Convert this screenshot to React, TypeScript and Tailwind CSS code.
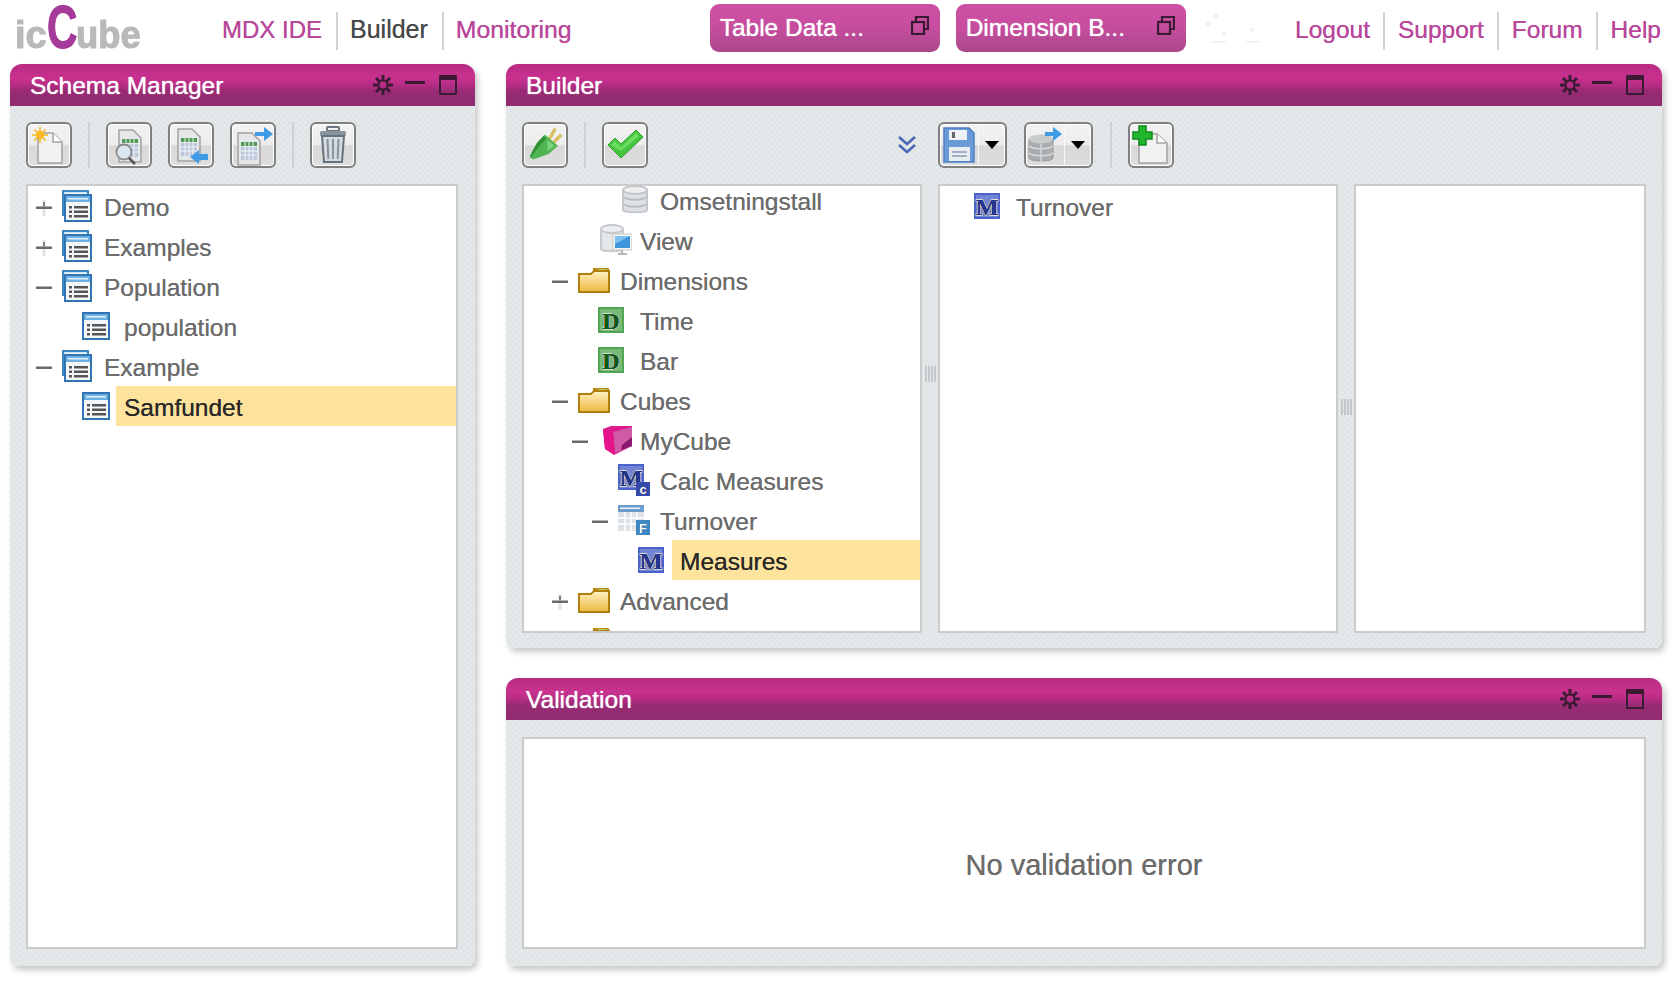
import React from 'react';

const font = 'font-["Liberation_Sans",Arial,sans-serif]';

// ---- tree icons ----
const ListBody = () => (
  <>
    <rect x="1" y="1" width="26" height="26" fill="#f4f8fb" stroke="#2f75b2" strokeWidth="2" />
    <rect x="2" y="2" width="24" height="6" fill="#6fb0e4" />
    <rect x="4" y="4" width="20" height="1.5" fill="#e4f2fc" />
    <rect x="5" y="12" width="3" height="2.5" fill="#555" />
    <rect x="10" y="12" width="14" height="2.5" fill="#555" />
    <rect x="5" y="16.5" width="3" height="2.5" fill="#555" />
    <rect x="10" y="16.5" width="14" height="2.5" fill="#555" />
    <rect x="5" y="21" width="3" height="2.5" fill="#555" />
    <rect x="10" y="21" width="14" height="2.5" fill="#555" />
  </>
);

const ListIcon = () => (
  <svg width="28" height="28" viewBox="0 0 28 28">
    <ListBody />
  </svg>
);

const StackIcon = () => (
  <svg width="30" height="32" viewBox="0 0 30 32">
    <rect x="1" y="1" width="25" height="24" fill="#cfe4f5" stroke="#3f88c6" strokeWidth="2" />
    <rect x="3" y="3" width="21" height="2" fill="#eef7fd" />
    <g transform="translate(2 4)">
      <ListBody />
    </g>
  </svg>
);

const FolderIcon = () => (
  <svg width="32" height="26" viewBox="0 0 32 26">
    <defs>
      <linearGradient id="folderFill" x1="0" y1="0" x2="0" y2="1">
        <stop offset="0" stopColor="#fdf1c4" />
        <stop offset="1" stopColor="#eeb93e" />
      </linearGradient>
    </defs>
    <path d="M15 1h15a1 1 0 0 1 1 1v4H15z" fill="#b98a12" />
    <path d="M20 2h9v2h-9z" fill="#bcd06a" />
    <path d="M1 7h12l3-3h15v21H1z" fill="url(#folderFill)" stroke="#b07f0c" strokeWidth="2" />
  </svg>
);

const LetterBox = ({ letter, bg, fg }: { letter: string; bg: string; fg: string }) => (
  <svg width="26" height="26" viewBox="0 0 26 26">
    <rect width="26" height="26" fill={bg} />
    <rect x="2" y="2" width="22" height="22" fill="#fff" opacity="0.22" />
    <text x="13" y="21.500" textAnchor="middle" fontFamily="Liberation Serif, serif" fontWeight="700" fontSize="24" fill={fg} stroke="#fff" strokeWidth="1.500" paintOrder="stroke">
      {letter}
    </text>
  </svg>
);

const DimIcon = () => <LetterBox letter="D" bg="#52a852" fg="#0d5a12" />;
const MeasureIcon = () => <LetterBox letter="M" bg="#4a62c9" fg="#24368f" />;

const CalcIcon = () => (
  <svg width="32" height="32" viewBox="0 0 32 32">
    <rect width="26" height="26" fill="#4a62c9" />
    <rect x="2" y="2" width="22" height="22" fill="#fff" opacity="0.22" />
    <text x="13" y="21.500" textAnchor="middle" fontFamily="Liberation Serif, serif" fontWeight="700" fontSize="24" fill="#24368f" stroke="#fff" strokeWidth="1.500" paintOrder="stroke">M</text>
    <rect x="18" y="18" width="14" height="14" fill="#3549a8" />
    <text x="25" y="30" textAnchor="middle" fontFamily="Liberation Sans, sans-serif" fontWeight="700" fontSize="13" fill="#fff">c</text>
  </svg>
);

const FactIcon = () => (
  <svg width="32" height="30" viewBox="0 0 32 30">
    <rect x="0" y="0" width="26" height="26" fill="#dfe3e8" />
    <rect x="0" y="0" width="26" height="7" fill="#6d9ccc" />
    <rect x="2" y="2.5" width="20" height="1.5" fill="#eef5fb" />
    <path d="M7 7v19M13 7v19M19 7v19M0 13h26M0 19h26" stroke="#fff" strokeWidth="1.5" />
    <rect x="18" y="15" width="14" height="15" fill="#3f86c4" />
    <text x="25" y="28" textAnchor="middle" fontFamily="Liberation Sans, sans-serif" fontWeight="700" fontSize="13" fill="#fff">F</text>
  </svg>
);

const CubeIcon = () => (
  <svg width="30" height="30" viewBox="0 0 30 30">
    <path d="M1 4 L9 1 L30 1 L30 21 L12 30 L3 24z" fill="#dd1b8d" />
    <path d="M11 7 L30 2 L30 21 L13 28z" fill="#cf5aa6" />
    <path d="M20 20 L30 12 L30 21 L19 25z" fill="#8a1770" />
    <path d="M1 4 L11 7 L13 29 L3 24z" fill="#e5148c" />
  </svg>
);

const DbIcon = () => (
  <svg width="26" height="30" viewBox="0 0 26 30">
    <path d="M1 5v20c0 3 24 3 24 0V5z" fill="#dfe2e5" stroke="#c3c7cb" strokeWidth="2" />
    <ellipse cx="13" cy="5" rx="12" ry="4" fill="#eceef0" stroke="#c3c7cb" strokeWidth="2" />
    <path d="M2 12c2 3.500 20 3.500 22 0M2 19c2 3.500 20 3.500 22 0" fill="none" stroke="#b9bdc2" strokeWidth="2" />
  </svg>
);

const ViewIcon = () => (
  <svg width="32" height="32" viewBox="0 0 32 32">
    <path d="M1 5v20c0 3 22 3 22 0V5z" fill="#e4e6e8" stroke="#c7cacd" strokeWidth="2" />
    <ellipse cx="12" cy="5" rx="11" ry="4" fill="#eceef0" stroke="#c7cacd" strokeWidth="2" />
    <rect x="13" y="10" width="19" height="16" fill="#f6f6f6" stroke="#c4c7ca" />
    <rect x="15" y="12" width="15" height="12" fill="#3f95dc" />
    <path d="M15 12h15l-15 8z" fill="#7fc0ee" />
    <path d="M18 30h9M22 26v4" stroke="#b4b7ba" strokeWidth="2" />
  </svg>
);

// ---- expanders ----
const Expander = ({ kind }: { kind?: 'plus' | 'minus' }) => {
  if (!kind) return <span className="w-[16px]" />;
  return (
    <svg width="16" height="18" viewBox="0 0 16 18" className="mt-[3px] blur-[0.3px]">
      {kind === 'plus' && <rect x="6.500" y="1" width="3" height="16" fill="#dfe1e3" />}
      {kind === 'plus' && <rect x="7" y="3" width="2" height="4" fill="#808080" />}
      <rect x="0" y="7.500" width="16" height="2.500" fill="#6a6a6a" />
    </svg>
  );
};

type Row = {
  level: number;
  label?: string;
  icon: React.ReactNode;
  exp?: 'plus' | 'minus';
  selected?: boolean;
};

const TreeRow = ({ row }: { row: Row }) => (
  <div className="flex h-[40px] items-center" style={{ paddingLeft: row.level * 20 }}>
    <span className="flex w-[34px] shrink-0 justify-start pl-[8px]">
      <Expander kind={row.exp} />
    </span>
    <span className="flex w-[34px] shrink-0 justify-start">{row.icon}</span>
    <span className={`h-[40px] flex-1 pl-[8px] text-[24.5px] leading-[43px] ${row.selected ? 'bg-[#fde39c] text-[#2a2a2a]' : 'text-[#6c6c6c]'}`}>
      {row.label}
    </span>
  </div>
);

const schemaRows: Row[] = [
  { level: 0, label: 'Demo', icon: <StackIcon />, exp: 'plus' },
  { level: 0, label: 'Examples', icon: <StackIcon />, exp: 'plus' },
  { level: 0, label: 'Population', icon: <StackIcon />, exp: 'minus' },
  { level: 1, label: 'population', icon: <ListIcon /> },
  { level: 0, label: 'Example', icon: <StackIcon />, exp: 'minus' },
  { level: 1, label: 'Samfundet', icon: <ListIcon />, selected: true },
];

const builderRows: Row[] = [
  { level: 2, label: 'Omsetningstall', icon: <span className="ml-[4px]"><DbIcon /></span> },
  { level: 1, label: 'View', icon: <span className="ml-[2px]"><ViewIcon /></span> },
  { level: 0, label: 'Dimensions', icon: <FolderIcon />, exp: 'minus' },
  { level: 1, label: 'Time', icon: <DimIcon /> },
  { level: 1, label: 'Bar', icon: <DimIcon /> },
  { level: 0, label: 'Cubes', icon: <FolderIcon />, exp: 'minus' },
  { level: 1, label: 'MyCube', icon: <span className="ml-[4px]"><CubeIcon /></span>, exp: 'minus' },
  { level: 2, label: 'Calc Measures', icon: <CalcIcon /> },
  { level: 2, label: 'Turnover', icon: <FactIcon />, exp: 'minus' },
  { level: 3, label: 'Measures', icon: <MeasureIcon />, selected: true },
  { level: 0, label: 'Advanced', icon: <FolderIcon />, exp: 'plus' },
  { level: 0, icon: <FolderIcon /> },
];

// ---- toolbar icons ----
const SheetGrid = () => (
  <g>
    <path d="M11 6h14l8 8v24H11z" fill="#e6e7e8" stroke="#a3a3a3" strokeWidth="1.500" />
    <rect x="14" y="15" width="16" height="4" fill="#4f9a55" />
    <rect x="14" y="20" width="16" height="13" fill="#bcc6db" />
    <path d="M18 15v18M22 15v18M26 15v18M14 24h16M14 28h16" stroke="#f2f4f8" strokeWidth="1" />
  </g>
);

const NewIcon = () => (
  <svg width="42" height="42" viewBox="0 0 42 42">
    <path d="M10 9h15l9 9v21H10z" fill="#f1f1f1" stroke="#a3a3a3" strokeWidth="1.500" />
    <path d="M25 9v9h9" fill="#fff" stroke="#a3a3a3" strokeWidth="1.500" />
    <circle cx="12" cy="11" r="4" fill="#ffb81f" />
    <path d="M12 3v16M4 11h16M6.500 5.500l11 11M17.500 5.500l-11 11" stroke="#ffb81f" strokeWidth="1.600" />
  </svg>
);

const SearchIcon = () => (
  <svg width="42" height="42" viewBox="0 0 42 42">
    <SheetGrid />
    <circle cx="16" cy="28" r="7.500" fill="#d9e8f3" stroke="#8b8b8b" strokeWidth="1.800" />
    <path d="M21 34l6 6" stroke="#555" strokeWidth="2.500" />
  </svg>
);

const ImportIcon = () => (
  <svg width="42" height="42" viewBox="0 0 42 42">
    <g transform="translate(-3 -1)"><SheetGrid /></g>
    <path d="M38 30h-9v-4l-9 7 9 7v-4h9z" fill="#3f9be6" />
  </svg>
);

const ExportIcon = () => (
  <svg width="42" height="42" viewBox="0 0 42 42">
    <g transform="translate(-5 3)"><SheetGrid /></g>
    <path d="M23 8h9V3l9 7-9 7v-5h-9z" fill="#3f9be6" />
  </svg>
);

const TrashIcon = () => (
  <svg width="42" height="42" viewBox="0 0 42 42">
    <rect x="15" y="3" width="12" height="4" rx="1" fill="none" stroke="#6c7680" strokeWidth="2" />
    <rect x="8" y="7" width="26" height="5" rx="1.500" fill="#8a949e" />
    <path d="M10 12h22l-2 26H12z" fill="#d5dadf" stroke="#68727c" strokeWidth="2" />
    <path d="M15.500 15l.8 20M21 15v20M26.500 15l-.8 20" stroke="#87919b" strokeWidth="2" />
  </svg>
);

const PlugIcon = () => (
  <svg width="36" height="36" viewBox="0 0 42 42">
    <path d="M26 14L33 2M31 18L40 9" stroke="#d8bf63" strokeWidth="4" />
    <path d="M21 9L36 22L26 31L18 34L7 38L3 34L8 25L12 18z" fill="#4fb552" />
    <path d="M3 38L12 25L22 14L20 10L12 18L7 27z" fill="#2f9135" />
    <path d="M24 15L32 22L24 28z" fill="#7fd27e" />
  </svg>
);

const CheckIcon = () => (
  <svg width="42" height="42" viewBox="0 0 42 42">
    <path d="M4 21L11 14L17 20L32 6L39 13L17 34z" fill="#46c53f" stroke="#2fa02c" strokeWidth="1" />
    <path d="M7 21L11 17L17 23L32 9L35 12L17 27z" fill="#6ddc62" />
  </svg>
);

const SaveIcon = () => (
  <svg width="32" height="36" viewBox="0 0 32 36">
    <path d="M1 1h25l5 5v29H1z" fill="#6a9bd8" stroke="#4f7fc0" strokeWidth="1.500" />
    <rect x="6" y="3" width="18" height="10" fill="#eef1f5" />
    <rect x="9" y="5" width="3" height="6" fill="#666" />
    <rect x="6" y="20" width="21" height="14" fill="#e9edf2" />
    <path d="M9 25h15M9 29h15" stroke="#8b9bb3" strokeWidth="1.500" />
  </svg>
);

const DbArrowIcon = () => (
  <svg width="36" height="36" viewBox="0 0 36 36">
    <path d="M2 12v19c0 4 24 4 24 0V12z" fill="#a9adaf" stroke="#999" />
    <ellipse cx="14" cy="12" rx="12" ry="4.500" fill="#c9cccd" />
    <path d="M2 19c3 3.500 21 3.500 24 0M2 26c3 3.500 21 3.500 24 0M14 17v18" stroke="#d8dadb" strokeWidth="1.500" fill="none" />
    <path d="M18 5h8V0l9 7-9 7V9h-8z" fill="#3f9be6" />
  </svg>
);

const PlusPageIcon = () => (
  <svg width="42" height="42" viewBox="0 0 42 42">
    <path d="M9 10h18l10 9v20H9z" fill="#f1f1f1" stroke="#a3a3a3" strokeWidth="1.500" />
    <path d="M27 10v9h10" fill="#fff" stroke="#a3a3a3" strokeWidth="1.500" />
    <path d="M9 2h7v6h6v7h-6v6H9v-6H3V8h6z" fill="#22b82e" stroke="#128a1c" strokeWidth="1.500" />
  </svg>
);

const btn = 'flex h-[46px] items-center justify-center rounded-[6px] border-2 border-[#808080] bg-[linear-gradient(#f3f3f3_0%,#ececec_50%,#d8d8d8_52%,#dedede_100%)] shadow-[inset_0_0_0_1px_#fff]';

const ToolButton = ({ children, className = '' }: { children: React.ReactNode; className?: string }) => (
  <div className={`${btn} w-[46px] shrink-0 ${className}`}>{children}</div>
);

const SplitButton = ({ children, className = '' }: { children: React.ReactNode; className?: string }) => (
  <div className={`${btn} w-[69px] shrink-0 justify-start overflow-hidden ${className}`}>
    <div className="flex h-full w-[39px] items-center justify-center border-r border-[#f7f7f7]">{children}</div>
    <div className="flex flex-1 justify-center">
      <span className="h-0 w-0 border-x-[7px] border-t-[8px] border-x-transparent border-t-black" />
    </div>
  </div>
);

const Sep = ({ className = '' }: { className?: string }) => (
  <div className={`h-[46px] w-[2px] shrink-0 bg-[#cdd1d2] ${className}`} />
);

// ---- panel chrome ----
const GearIcon = () => (
  <svg width="20" height="20" viewBox="0 0 20 20">
    <g stroke="#3b1a33" strokeWidth="3">
      <path d="M10 0v6M10 14v6M0 10h6M14 10h6M3 3l4 4M13 13l4 4M17 3l-4 4M7 13l-4 4" />
    </g>
    <circle cx="10" cy="10" r="4.500" fill="none" stroke="#3b1a33" strokeWidth="2" />
  </svg>
);

const HeaderButtons = () => (
  <div className="flex items-center">
    <GearIcon />
    <span className="mb-[6px] ml-[12px] h-[3px] w-[20px] bg-[#3b1a33]" />
    <span className="ml-[14px] mr-[18px] h-[20px] w-[18px] rounded-[1px] border-2 border-t-[5px] border-[#3b1a33]" />
  </div>
);

const Panel = ({ title, className = '', children }: { title: string; className?: string; children: React.ReactNode }) => (
  <div className={`flex flex-col rounded-t-[12px] rounded-b-[8px] bg-[repeating-conic-gradient(#e5e9ea_0%_25%,#dfe4e6_0%_50%)] bg-[length:6px_6px] shadow-[3px_4px_6px_rgba(0,0,0,0.22)] ${className}`}>
    <div className="flex h-[42px] shrink-0 items-center justify-between rounded-t-[12px] bg-[linear-gradient(#b92a83_0%,#c9318f_32%,#b62c85_50%,#992b74_64%,#8f2c6e_100%)] pl-[20px]">
      <span className="pt-[2px] text-[24.5px] text-white [text-shadow:0_0_1px_#fff]">{title}</span>
      <HeaderButtons />
    </div>
    {children}
  </div>
);

const Box = ({ className = '', children }: { className?: string; children?: React.ReactNode }) => (
  <div className={`overflow-hidden border-2 border-[#cbcbcb] bg-white ${className}`}>{children}</div>
);

const Grip = ({ className = '' }: { className?: string }) => (
  <div className={`flex h-[16px] w-[16px] justify-center gap-[1px] ${className}`}>
    <span className="w-[2px] bg-[#c4c8ca]" />
    <span className="w-[2px] bg-[#c4c8ca]" />
    <span className="w-[2px] bg-[#c4c8ca]" />
    <span className="w-[2px] bg-[#c4c8ca]" />
  </div>
);

const Tab = ({ label }: { label: string }) => (
  <div className="flex h-[48px] w-[230px] items-center justify-between rounded-[9px] bg-[linear-gradient(#cf4fa5_0%,#c64d9e_50%,#a9478a_100%)] pl-[10px] pr-[11px] text-[24.5px] text-white [text-shadow:0_0_1px_#fff]">
    <span>{label}</span>
    <svg width="18" height="19" viewBox="0 0 18 19" className="mb-[6px]" fill="none" stroke="#3a1a33" strokeWidth="2.200">
      <rect x="1" y="6" width="12" height="12" />
      <path d="M5 5V1h12v12h-3" />
    </svg>
  </div>
);

const NavLink = ({ className = '', children }: { className?: string; children: React.ReactNode }) => (
  <span className={`flex h-[38px] items-center pb-[2px] text-[#b9479b] ${className}`}>{children}</span>
);

const divider = 'border-r-2 border-[#d2d2d2]';

const Logo = () => (
  <div className="ml-[15px] flex h-[53px] w-[127px] items-end font-bold text-[#b9b9b9] blur-[0.5px] [-webkit-text-stroke:1px_currentColor]">
    <span className="w-[33px] text-[38px] leading-[36px]">ic</span>
    <span className="-mr-[15px] origin-bottom-left scale-x-[0.68] text-[62px] leading-[52px] text-[#a63a9a]">C</span>
    <span className="origin-bottom-left scale-x-[0.96] text-[38px] leading-[36px]">ube</span>
  </div>
);

export default function App() {
  return (
    <div className={`h-[982px] w-[1680px] overflow-hidden bg-white [text-shadow:0_0_0.6px_currentColor] ${font}`}>
      <header className="flex h-[64px]">
        <Logo />
        <div className="ml-[68px] mt-[12px] flex">
          <NavLink className={`pl-[12px] pr-[14px] text-[24px] ${divider}`}>MDX IDE</NavLink>
          <NavLink className={`pl-[12px] pr-[14px] text-[25px] !text-[#4a4a4a] ${divider}`}>Builder</NavLink>
          <NavLink className="pl-[12px] pr-[14px] text-[24.8px]">Monitoring</NavLink>
        </div>
        <div className="ml-[124px] mt-[4px] flex gap-[16px]">
          <Tab label="Table Data ..." />
          <Tab label="Dimension B..." />
        </div>
        <svg width="60" height="34" viewBox="0 0 60 34" className="ml-[18px] mt-[12px]" fill="#f1f1f1">
          <circle cx="12" cy="4" r="3" />
          <circle cx="4" cy="12" r="3" />
          <circle cx="20" cy="22" r="2" />
          <rect x="6" y="29" width="16" height="1.500" />
          <rect x="42" y="29" width="14" height="1.500" />
          <circle cx="48" cy="18" r="2" />
        </svg>
        <div className="ml-auto mr-[6px] mt-[12px] flex text-[24.5px]">
          <NavLink className={`px-[13px] ${divider}`}>Logout</NavLink>
          <NavLink className={`px-[13px] ${divider}`}>Support</NavLink>
          <NavLink className={`px-[13px] ${divider}`}>Forum</NavLink>
          <NavLink className="px-[13px]">Help</NavLink>
        </div>
      </header>

      <main className="flex gap-[31px] pl-[10px]">
        <Panel title="Schema Manager" className="h-[902px] w-[465px]">
          <div className="flex h-[78px] shrink-0 items-center pl-[16px]">
            <ToolButton><NewIcon /></ToolButton>
            <Sep className="ml-[16px]" />
            <ToolButton className="ml-[16px]"><SearchIcon /></ToolButton>
            <ToolButton className="ml-[16px]"><ImportIcon /></ToolButton>
            <ToolButton className="ml-[16px]"><ExportIcon /></ToolButton>
            <Sep className="ml-[16px]" />
            <ToolButton className="ml-[16px]"><TrashIcon /></ToolButton>
          </div>
          <Box className="mb-[17px] ml-[16px] mr-[17px] flex-1">
            {schemaRows.map((r) => (
              <TreeRow key={r.label} row={r} />
            ))}
          </Box>
        </Panel>

        <div className="flex w-[1156px] flex-col gap-[30px]">
          <Panel title="Builder" className="h-[584px]">
            <div className="flex h-[78px] shrink-0 items-center pl-[16px]">
              <ToolButton><PlugIcon /></ToolButton>
              <Sep className="ml-[16px]" />
              <ToolButton className="ml-[16px]"><CheckIcon /></ToolButton>
              <svg width="20" height="20" viewBox="0 0 20 20" className="ml-[249px]" fill="none" stroke="#4a68b5" strokeWidth="2.600">
                <path d="M2 2l8 7 8-7M2 10l8 7 8-7" />
              </svg>
              <SplitButton className="ml-[21px]"><SaveIcon /></SplitButton>
              <SplitButton className="ml-[17px]"><DbArrowIcon /></SplitButton>
              <Sep className="ml-[17px]" />
              <ToolButton className="ml-[16px]"><PlusPageIcon /></ToolButton>
            </div>
            <div className="flex h-[449px] pl-[16px]">
              <Box className="h-full w-[400px]">
                <div className="-mt-[6px] pl-[20px]">
                  {builderRows.map((r, i) => (
                    <TreeRow key={i} row={r} />
                  ))}
                </div>
              </Box>
              <Grip className="mt-[182px]" />
              <Box className="h-full w-[400px]">
                <TreeRow row={{ level: 0, label: 'Turnover', icon: <MeasureIcon /> }} />
              </Box>
              <Grip className="mt-[215px]" />
              <Box className="h-full w-[292px]" />
            </div>
          </Panel>

          <Panel title="Validation" className="h-[288px]">
            <div className="flex-1 pb-[17px] pl-[16px] pr-[16px] pt-[17px]">
              <Box className="flex h-full items-center justify-center pt-[46px] text-[29px] text-[#6c6c6c]">
                No validation error
              </Box>
            </div>
          </Panel>
        </div>
      </main>
    </div>
  );
}
